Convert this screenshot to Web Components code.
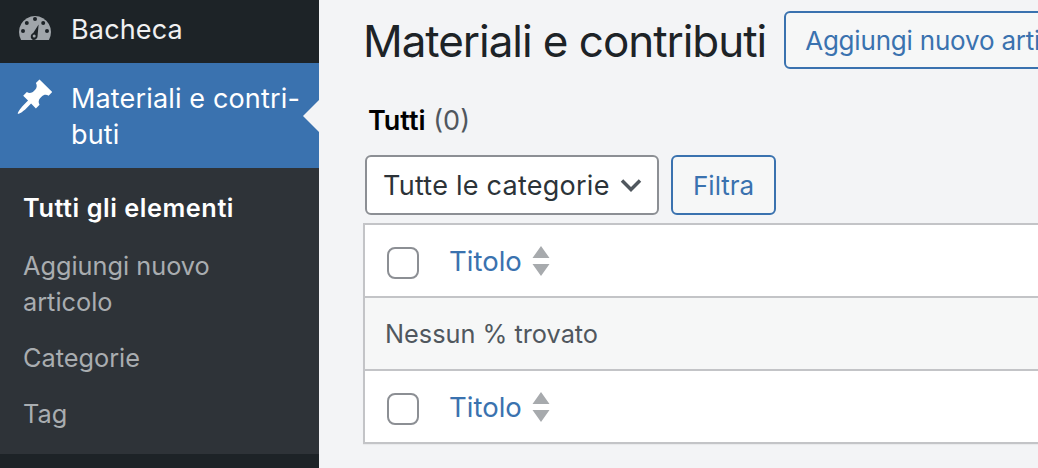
<!DOCTYPE html>
<html lang="it"><head><meta charset="utf-8"><title>Materiali e contributi</title>
<style>
html,body{margin:0;height:100%;overflow:hidden;background:#f3f4f6}
body{font-family:Inter,"Liberation Sans",sans-serif;width:1038px;height:468px}
wp-shell{height:468px}
</style></head><body>
<wp-shell>
  <wp-sidebar slot="side">
    <wp-menu-item kind="top" icon="gauge">Bacheca</wp-menu-item>
    <wp-menu-item kind="current" icon="pin">Materiali e contri-<br>buti</wp-menu-item>
    <wp-submenu>
      <wp-sub-item current>Tutti gli elementi</wp-sub-item>
      <wp-sub-item>Aggiungi nuovo articolo</wp-sub-item>
      <wp-sub-item>Categorie</wp-sub-item>
      <wp-sub-item>Tag</wp-sub-item>
    </wp-submenu>
  </wp-sidebar>
  <wp-page>
    <wp-header>Materiali e contributi<wp-button slot="action" wide>Aggiungi nuovo articolo</wp-button></wp-header>
    <wp-views></wp-views>
    <wp-filters>
      <wp-select>Tutte le categorie</wp-select>
      <wp-button>Filtra</wp-button>
    </wp-filters>
    <wp-table>
      <wp-head-row>Titolo</wp-head-row>
      <wp-empty-row>Nessun % trovato</wp-empty-row>
      <wp-head-row>Titolo</wp-head-row>
    </wp-table>
  </wp-page>
</wp-shell>
<script>
function def(name,html){
  customElements.define(name,class extends HTMLElement{
    constructor(){super();this.attachShadow({mode:'open'}).innerHTML=html;}
  });
}
def('wp-shell',`<style>:host{display:flex;width:1038px;overflow:hidden;align-items:stretch}</style><slot name="side"></slot><slot></slot>`);
def('wp-sidebar',`<style>:host{display:flex;flex-direction:column;flex:none;width:319px;background:#1d2327}</style><slot></slot>`);
const icons={
 gauge:`<svg width="40" height="40" viewBox="15 12 40 40"><path fill="#a0a5aa" d="M21.1 40A16 16 0 1 1 48.9 40z"/><g fill="#1d2327"><circle cx="35" cy="19" r="2"/><circle cx="26.8" cy="23" r="2"/><circle cx="43.2" cy="23" r="2"/><circle cx="23" cy="31" r="2"/><circle cx="47" cy="31" r="2"/><path d="M38.6 24.6l-1 11c.2 2.4-1.5 4.4-3.6 4.4s-3.6-2-3.2-4c.2-1.4 1.1-2.5 2.4-3z"/></g><circle cx="34.2" cy="36" r="1.5" fill="#a0a5aa"/></svg>`,
 pin:`<svg width="40" height="40" viewBox="0 0 20 20"><path fill="#fff" d="M10.44 3.02l1.82-1.82 6.36 6.35-1.83 1.82c-1.05-.68-2.48-.57-3.41.36l-.75.75c-.92.93-1.04 2.35-.35 3.41l-1.83 1.82-2.41-2.41-2.8 2.79c-.42.42-3.38 2.71-3.8 2.29s1.86-3.39 2.28-3.81l2.79-2.79L4.1 9.36l1.83-1.82c1.05.69 2.48.57 3.4-.36l.75-.75c.93-.92 1.05-2.35.36-3.41z"/></svg>`
};
customElements.define('wp-menu-item',class extends HTMLElement{
  constructor(){super();const k=this.getAttribute('kind'),cur=k==='current';
    const r=this.attachShadow({mode:'open'});
    r.innerHTML=`<style>
    :host{display:flex;position:relative;box-sizing:border-box;height:${cur?105:63}px;background:${cur?'#3a72af':'#1d2327'};color:${cur?'#fff':'#f0f0f1'};font-size:27px;line-height:36px;letter-spacing:.15px}
    .i{flex:none;width:71px;box-sizing:border-box;padding:${cur?14:12}px 0 0 15px;overflow:hidden}
    .i svg{display:block}
    .t{padding-top:${cur?'18px':'12px'}}
    .a{position:absolute;right:0;top:37px;border:16px solid transparent;border-left-width:0;border-right:16px solid #f3f4f6}
    </style><div class="i">${icons[this.getAttribute('icon')]}</div><div class="t"><slot></slot></div>${cur?'<div class="a"></div>':''}`;
  }
});
def('wp-submenu',`<style>:host{display:flex;flex-direction:column;background:#2e3338;padding:12px 0 14px;height:286px;box-sizing:border-box}</style><slot></slot>`);
customElements.define('wp-sub-item',class extends HTMLElement{
  constructor(){super();const c=this.hasAttribute('current');const r=this.attachShadow({mode:'open'});
    r.innerHTML=`<style>:host{display:block;padding:10px 24px ${c?12:10}px 23px;width:255px;font-size:25.3px;line-height:36px;color:${c?'#fff':'#a9adb0'};font-weight:${c?600:400};letter-spacing:${c?'.55px':'0'}}</style><slot></slot>`;}
});
def('wp-page',`<style>:host{display:flex;flex-direction:column;flex:none;width:900px;padding:0 0 0 44px;box-sizing:border-box;color:#1d2327}</style><slot></slot>`);
def('wp-header',`<style>:host{display:flex;align-items:center;gap:18px;height:80px;font-size:44px;font-weight:400;line-height:60px;white-space:nowrap;color:#1d2327;letter-spacing:-1.05px}.t{padding-top:2px}</style><div class="t"><slot></slot></div><slot name="action"></slot>`);
customElements.define('wp-button',class extends HTMLElement{
  constructor(){super();const w=this.hasAttribute('wide');const r=this.attachShadow({mode:'open'});
    r.innerHTML=`<style>:host{display:inline-flex;align-items:center;box-sizing:border-box;height:${w?58:60}px;padding:${w?'2px 19px 0':'0 20px'};border:2px solid #3a72af;border-radius:6px;background:#f6f7f7;color:#3a72af;font-size:26px;letter-spacing:${w?'-.2px':'0'};white-space:nowrap;flex:none}</style><slot></slot>`;}
});
def('wp-views',`<style>:host{display:block;margin-top:21px;height:36px;line-height:40px;font-size:27px;color:#50575e;padding-left:5px}b{font-weight:600;color:#000}</style><b>Tutti</b> (0)`);
def('wp-filters',`<style>:host{display:flex;gap:12px;margin-top:18px;padding-left:2px}</style><slot></slot>`);
def('wp-select',`<style>:host{display:flex;align-items:center;box-sizing:border-box;height:60px;width:294px;padding:0 15px 0 16px;border:2px solid #8c8f94;border-radius:6px;background:#fff;color:#2c3338;font-size:27px;letter-spacing:.25px;white-space:nowrap;flex:none;justify-content:space-between}svg{flex:none}</style><slot></slot><svg width="22" height="14" viewBox="0 0 22 14"><path d="M2 2.5l9 9 9-9" fill="none" stroke="#50575e" stroke-width="3.5"/></svg>`);
def('wp-table',`<style>:host{display:block;box-sizing:border-box;margin:8px 0 0;border:2px solid #c3c4c7;background:#fff;box-shadow:0 1px 1px rgba(0,0,0,.04)}</style><slot></slot>`);
def('wp-head-row',`<style>:host{display:flex;align-items:center;height:71px;background:#fff;box-sizing:border-box}
.c{flex:none;box-sizing:border-box;width:32px;height:32px;border:2px solid #8c8f94;border-radius:8px;background:#fff;margin:4px 0 0 22px}
.t{margin-left:30px;color:#3a72af;font-size:27.5px}
svg{margin-left:10px;display:block}</style><div class="c"></div><div class="t"><slot></slot></div><svg width="18" height="30" viewBox="0 0 18 30"><path fill="#a7aaad" d="M9 0l8.5 12H.5zM9 30L.5 18h17z"/></svg>`);
def('wp-empty-row',`<style>:host{display:flex;align-items:center;height:75px;box-sizing:border-box;border-top:2px solid #c3c4c7;border-bottom:2px solid #c3c4c7;background:#f6f7f7;padding-left:20px;color:#50575e;font-size:25.3px}</style><slot></slot>`);
</script>
</body></html>
